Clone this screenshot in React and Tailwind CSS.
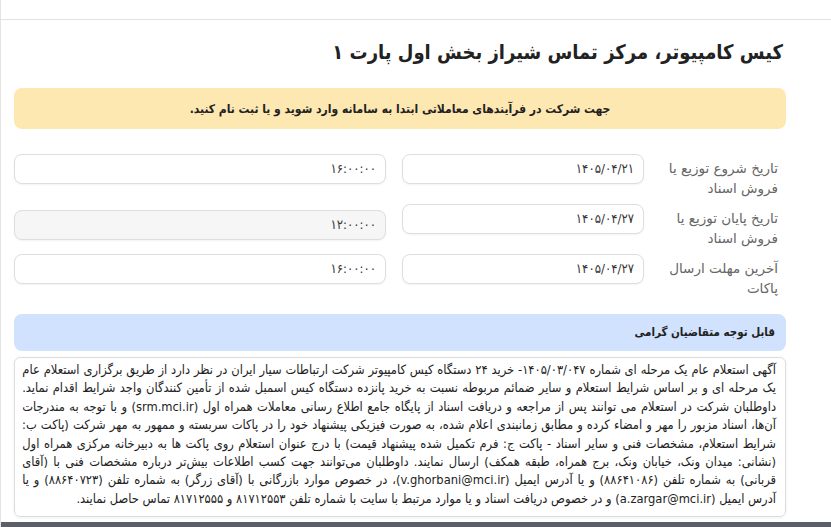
const dates = [
  {
    label: "تاریخ شروع توزیع یا فروش اسناد",
    date: "۱۴۰۵/۰۴/۲۱",
    time: "۱۶:۰۰:۰۰",
    locked: false,
  },
  {
    label: "تاریخ پایان توزیع یا فروش اسناد",
    date: "۱۴۰۵/۰۴/۲۷",
    time: "۱۲:۰۰:۰۰",
    locked: true,
  },
  {
    label: "آخرین مهلت ارسال پاکات",
    date: "۱۴۰۵/۰۴/۲۷",
    time: "۱۶:۰۰:۰۰",
    locked: false,
  },
];

// notice body, one entry per printed line
const notice = [
  "آگهی استعلام عام یک مرحله ای شماره ۱۴۰۵/۰۳/۰۴۷- خرید ۲۴ دستگاه کیس کامپیوتر شرکت ارتباطات سیار ایران در نظر دارد از طریق برگزاری استعلام عام",
  "یک مرحله ای و بر اساس شرایط استعلام و سایر ضمائم مربوطه نسبت به خرید پانزده دستگاه کیس اسمبل شده از تأمین کنندگان واجد شرایط اقدام نماید.",
  "داوطلبان شرکت در استعلام می توانند پس از مراجعه و دریافت اسناد از پایگاه جامع اطلاع رسانی معاملات همراه اول (srm.mci.ir) و با توجه به مندرجات",
  "آن‌ها، اسناد مزبور را مهر و امضاء کرده و مطابق زمانبندی اعلام شده، به صورت فیزیکی پیشنهاد خود را در پاکات سربسته و ممهور به مهر شرکت (پاکت ب:",
  "شرایط استعلام، مشخصات فنی و سایر اسناد - پاکت ج: فرم تکمیل شده پیشنهاد قیمت) با درج عنوان استعلام روی پاکت ها به دبیرخانه مرکزی همراه اول",
  "(نشانی: میدان ونک، خیابان ونک، برج همراه، طبقه همکف) ارسال نمایند. داوطلبان می‌توانند جهت کسب اطلاعات بیش‌تر درباره مشخصات فنی با (آقای",
  "قربانی) به شماره تلفن (۸۸۶۴۱۰۸۶) و یا آدرس ایمیل (v.ghorbani@mci.ir)، در خصوص موارد بازرگانی با (آقای زرگر) به شماره تلفن (۸۸۶۴۰۷۲۳) و یا",
  "آدرس ایمیل (a.zargar@mci.ir) و در خصوص دریافت اسناد و یا موارد مرتبط با سایت با شماره تلفن ۸۱۷۱۲۵۵۳ و ۸۱۷۱۲۵۵۵ تماس حاصل نمایند.",
];

const condensed = { fontFamily: '"DejaVu Sans Condensed", "DejaVu Sans", sans-serif' };

function Field({ value, locked, className = "" }) {
  return (
    <div
      className={`h-[30px] rounded-lg border border-[#dedede] shadow-[0_1px_2px_rgba(0,0,0,0.05)] flex items-center px-[9px] text-[13px] text-[#333] ${
        locked ? "bg-[#f6f6f6]" : "bg-white"
      } ${className}`}
      style={condensed}
    >
      {value}
    </div>
  );
}

// a justified line: words spread edge to edge
function JustifiedLine({ text }) {
  return (
    <div className="flex justify-between whitespace-nowrap">
      {text.split(" ").map((word, i) => (
        <span key={i}>{word}</span>
      ))}
    </div>
  );
}

export default function App() {
  return (
    <div
      dir="rtl"
      className="w-[831px] h-[527px] overflow-hidden bg-white flex flex-col border-l border-[#e3e3e3]"
      style={{ fontFamily: '"DejaVu Sans", sans-serif' }}
    >
      <div className="h-[20px] shrink-0 border-b border-[#e2e2e2]" />

      <div className="flex-1 pr-[45px] pl-[13px] flex flex-col">
        {/* page title */}
        <h1
          className="mt-[16px] h-[32px] pr-[3px] text-[20px] font-bold text-[#222] leading-[32px]"
          style={condensed}
        >
          کیس کامپیوتر، مرکز تماس شیراز بخش اول پارت ۱
        </h1>

        {/* login hint */}
        <div
          className="mt-[20px] h-[41px] rounded-lg bg-[#fee8b2] flex items-center justify-center text-[12px] font-bold text-[#222]"
          style={condensed}
        >
          جهت شرکت در فرآیندهای معاملاتی ابتدا به سامانه وارد شوید و یا ثبت نام کنید.
        </div>

        {/* schedule */}
        <div className="mt-[25px] flex flex-col">
          {dates.map((row, i) => (
            <div key={i} className="flex h-[50px] items-start">
              <div className="w-[142px] shrink-0 pr-[8px] pl-[10px] pt-[4px] text-[13.5px] leading-[20px] text-[#666]">
                {row.label}
              </div>
              <Field value={row.date} className="w-[242px] shrink-0" />
              <Field
                value={row.time}
                locked={row.locked}
                className={`mr-[16px] flex-1 ${row.locked ? "mt-[6px]" : ""}`}
              />
            </div>
          ))}
        </div>

        {/* notice */}
        <div
          className="mt-[10px] h-[37px] rounded-lg bg-[#d0e2fd] flex items-center pr-[11px] text-[11.5px] font-bold text-[#222]"
          style={condensed}
        >
          قابل توجه متقاضیان گرامی
        </div>
        <div
          className="mt-[6px] h-[160px] rounded-md border border-[#dcdcdc] shadow-[0_1px_3px_rgba(0,0,0,0.06)] pr-[9px] pl-[7px] py-[3px] text-[12.8px] leading-[18.4px] text-[#222] overflow-hidden"
          style={condensed}
        >
          {notice.slice(0, -1).map((line, i) => (
            <JustifiedLine key={i} text={line} />
          ))}
          <div>{notice[notice.length - 1]}</div>
        </div>
      </div>

      <div className="h-[5px] shrink-0 bg-[#5b6068]" />
    </div>
  );
}
